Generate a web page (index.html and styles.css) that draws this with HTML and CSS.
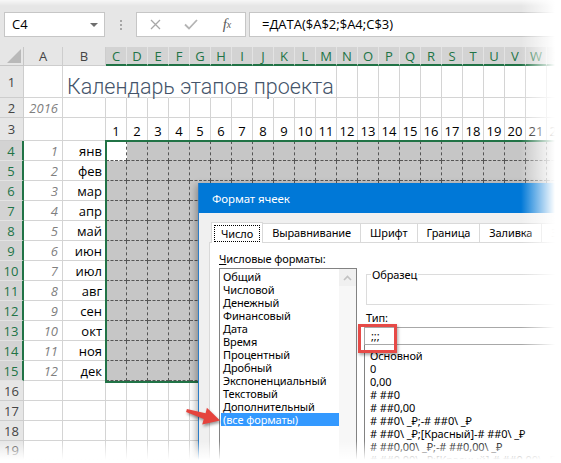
FILE: index.html
```html
<!DOCTYPE html>
<html lang="ru">
<head>
    <meta charset="UTF-8">
    <meta name="viewport" content="width=device-width, initial-scale=1.0">
    <title>Календарь этапов проекта</title>
    <link rel="stylesheet" href="styles.css">
</head>
<body>
    <div class="app">
        <div class="formula-bar">
            <div class="name-box">C4<span class="dropdown"></span></div>
            <div class="grip"><i></i><i></i><i></i></div>
            <div class="fx-buttons">
                <span class="fx-slot">
                    <svg width="11" height="11" viewBox="0 0 11 11"><path d="M1 1 L10 10 M10 1 L1 10" stroke="#a8a8a8" stroke-width="1.3" fill="none"/></svg>
                </span>
                <span class="fx-slot">
                    <svg width="14" height="11" viewBox="0 0 14 11"><path d="M1 5.5 L5 9.5 L13 1" stroke="#b4b4b4" stroke-width="1.8" fill="none"/></svg>
                </span>
                <span class="fx-slot fx">f<sub>x</sub></span>
            </div>
            <div class="formula-input">=ДАТА($A$2;$A4;C$3)</div>
        </div>

        <div class="sheet" id="sheet"></div>

        <!-- рамка выделенного диапазона -->
        <div class="selection"></div>

        <div class="dialog">
            <div class="dialog-title">Формат ячеек</div>
            <div class="dialog-body">
                <div class="tabs">
                    <div class="tab active"><span>Число</span></div>
                    <div class="tab">Выравнивание</div>
                    <div class="tab">Шрифт</div>
                    <div class="tab">Граница</div>
                    <div class="tab">Заливка</div>
                    <div class="tab disabled">Защита</div>
                </div>
                <div class="tab-page">
                    <div class="left-col">
                        <div class="label"><u>Ч</u>исловые форматы:</div>
                        <div class="category-list">
                            <ul>
                                <li>Общий</li>
                                <li>Числовой</li>
                                <li>Денежный</li>
                                <li>Финансовый</li>
                                <li>Дата</li>
                                <li>Время</li>
                                <li>Процентный</li>
                                <li>Дробный</li>
                                <li>Экспоненциальный</li>
                                <li>Текстовый</li>
                                <li>Дополнительный</li>
                                <li class="selected">(все форматы)</li>
                            </ul>
                            <div class="scrollbar">
                                <div class="scroll-up">
                                    <svg width="9" height="6" viewBox="0 0 9 6"><path d="M1 5 L4.5 1.5 L8 5" stroke="#c2c2c2" stroke-width="1.6" fill="none"/></svg>
                                </div>
                            </div>
                        </div>
                    </div>
                    <div class="right-col">
                        <fieldset class="sample"><legend>Образец</legend></fieldset>
                        <div class="label type-label">Тип:</div>
                        <div class="type-input">;;;</div>
                        <ul class="type-list">
                            <li>Основной</li>
                            <li>0</li>
                            <li>0,00</li>
                            <li># ##0</li>
                            <li># ##0,00</li>
                            <li># ##0\ _₽;-# ##0\ _₽</li>
                            <li># ##0\ _₽;[Красный]-# ##0\ _₽</li>
                            <li># ##0,00\ _₽;-# ##0,00\ _₽</li>
                            <li># ##0,00\ _₽;[Красный]-# ##0,00\ _₽</li>
                        </ul>
                    </div>
                </div>
            </div>
        </div>

        <!-- пометки поверх скриншота -->
        <div class="callout"></div>
        <svg class="red-arrow" width="45" height="30" viewBox="0 0 45 30">
            <polygon points="6.9,9.1 25.6,13.2 26.9,7.8 40,20.6 22.2,24.4 23.8,19 6.1,11.9" fill="#e5433d"/>
        </svg>

        <div class="fade fade-top"></div>
        <div class="fade fade-right"></div>
        <div class="fade fade-bottom"></div>
    </div>

    <script src="script.js"></script>
</body>
</html>
```

FILE: styles.css
```css
* {
    box-sizing: border-box;
}

body {
    margin: 0;
    background-color: #fff;
    font-family: 'Open Sans', sans-serif;
    color: #000;
}

.app {
    position: relative;
    width: 561px;
    height: 463px;
    overflow: hidden;
    background-color: #fff;
}

/* Строка формул */
.formula-bar {
    display: flex;
    align-items: flex-start;
    height: 47px;
    padding: 12px 0 0 4px;
    background-color: #e6e6e6;
    font-size: 13px;
}

.name-box {
    position: relative;
    width: 101px;
    height: 25px;
    padding-left: 7px;
    line-height: 23px;
    background-color: #fff;
    border: 1px solid #c6c6c6;
}

.dropdown {
    position: absolute;
    right: 6px;
    top: 10px;
    border-left: 4px solid transparent;
    border-right: 4px solid transparent;
    border-top: 4px solid #6e6e6e;
}

.grip {
    display: flex;
    flex-direction: column;
    gap: 2px;
    margin: 8px 0 0 15px;
}

.grip i {
    display: block;
    width: 2px;
    height: 2px;
    background-color: #a6a6a6;
}

.fx-buttons {
    display: flex;
    width: 110px;
    height: 25px;
    margin-left: 14px;
    background-color: #fff;
    border: 1px solid #c6c6c6;
}

.fx-slot {
    display: flex;
    align-items: center;
    justify-content: center;
    width: 36px;
}

.fx {
    font-family: 'Liberation Serif', serif;
    font-style: italic;
    font-size: 15px;
    color: #5a5a5a;
}

.fx sub {
    font-size: 10px;
    vertical-align: -1px;
}

.formula-input {
    flex: 1;
    height: 25px;
    margin-left: 3px;
    padding-left: 12px;
    line-height: 23px;
    background-color: #fff;
    border: 1px solid #c6c6c6;
    white-space: nowrap;
}

/* Лист */
.sheet {
    display: grid;
    grid-template-columns: 24px 39px 43px repeat(22, 21px);
    grid-template-rows: 19px 32px 20px 23px repeat(15, 20px);
    font-size: 13px;
    background-color: #fff;
}

.sheet > div {
    display: flex;
    align-items: flex-end;
    white-space: nowrap;
    line-height: 18px;
}

.corner {
    position: relative;
    background-color: #e6e6e6;
    border-right: 1px solid #c6c6c6;
    border-bottom: 1px solid #c6c6c6;
}

.corner::after {
    content: '';
    position: absolute;
    right: 2px;
    bottom: 2px;
    border-left: 14px solid transparent;
    border-bottom: 14px solid #b9b9b9;
}

.sheet > .col-head,
.sheet > .row-head {
    align-items: center;
    justify-content: center;
    background-color: #e6e6e6;
    color: #444;
    border-right: 1px solid #cdcdcd;
    border-bottom: 1px solid #cdcdcd;
}

.sheet > .col-head.selected {
    background-color: #d3d3d3;
    color: #217346;
    border-right-color: #e3e3e3;
    border-bottom: 2px solid #217346;
}

.sheet > .row-head.selected {
    background-color: #d3d3d3;
    color: #217346;
    border-bottom-color: #e3e3e3;
    border-right: 2px solid #217346;
}

.cell {
    border-right: 1px solid #d4d4d4;
    border-bottom: 1px solid #d4d4d4;
}

.cell.open {
    border-right-color: transparent;
}

.title {
    position: relative;
    z-index: 1;
    padding-left: 4px;
    padding-bottom: 1px;
    font-family: 'Roboto', sans-serif;
    font-weight: 300;
    font-size: 21.5px;
    line-height: 28px;
    color: #44546a;
    overflow: visible;
}

.sheet > .num {
    justify-content: flex-end;
    padding-right: 4px;
    font-style: italic;
    color: #7f7f7f;
}

.sheet > .month {
    justify-content: flex-end;
    padding-right: 3px;
}

.sheet > .day {
    justify-content: center;
}

.range {
    background-color: #c6c6c6;
    border-right: 1px dashed #555;
    border-bottom: 1px dashed #555;
}

.range.active {
    background-color: #fff;
}

.selection {
    position: absolute;
    left: 105px;
    top: 140px;
    width: 480px;
    height: 243px;
    border: 2px solid #217346;
    pointer-events: none;
}

/* Окно "Формат ячеек" */
.dialog {
    position: absolute;
    left: 198px;
    top: 183px;
    width: 400px;
    height: 300px;
    background-color: #f0f0f0;
    border-left: 1px solid #2a7cc7;
    box-shadow: -2px 2px 7px rgba(0, 0, 0, 0.3);
    font-family: 'Noto Sans', sans-serif;
    font-size: 11px;
    letter-spacing: -0.1px;
}

.dialog-title {
    height: 30px;
    padding-left: 13px;
    line-height: 31px;
    font-size: 11.5px;
    background-color: #0078d7;
    color: #fff;
}

.dialog-body {
    padding: 8px 0 0 10px;
}

.tabs {
    display: flex;
    align-items: flex-end;
    height: 21px;
    padding-left: 2px;
}

.tab {
    height: 19px;
    margin-left: -1px;
    padding: 0 9px;
    line-height: 18px;
    background-color: #fff;
    border: 1px solid #d9d9d9;
    border-bottom: none;
}

.tab.active {
    position: relative;
    z-index: 1;
    height: 21px;
    margin-left: 0;
    margin-bottom: -1px;
    padding: 2px 2px 0;
}

.tab.active span {
    display: block;
    padding: 0 6px;
    line-height: 15px;
    border: 1px dotted #000;
}

.tab.disabled {
    color: #b5b5b5;
}

.tab-page {
    display: flex;
    gap: 7px;
    height: 300px;
    padding: 8px 0 0 9px;
    background-color: #fff;
    border: 1px solid #d9d9d9;
}

.label {
    line-height: 15px;
}

.left-col {
    width: 138px;
}

.left-col .label {
    margin-bottom: 2px;
}

.category-list {
    display: flex;
    height: 200px;
    border: 1px solid #828282;
}

.category-list ul {
    flex: 1;
    margin: 0;
    padding: 1px 0 0 1px;
    list-style: none;
}

.category-list li {
    height: 13px;
    padding-left: 2px;
    line-height: 13px;
}

.category-list li.selected {
    background-color: #3399ff;
    color: #fff;
}

.scrollbar {
    width: 17px;
    background-color: #f7f7f7;
}

.scroll-up {
    display: flex;
    align-items: center;
    justify-content: center;
    height: 17px;
    background-color: #f0f0f0;
}

.right-col {
    flex: 1;
}

.sample {
    height: 38px;
    margin: 16px 0 0 2px;
    padding: 0;
    border: 1px solid #dcdcdc;
}

.sample legend {
    margin-left: 4px;
    padding: 0 1px;
    line-height: 15px;
}

.type-label {
    margin: 5px 0 0 2px;
}

.type-input {
    height: 18px;
    margin-top: 2px;
    padding-left: 6px;
    line-height: 16px;
    border: 1px solid #a8a8a8;
}

.type-list {
    margin: 0;
    padding: 4px 0 0 5px;
    list-style: none;
    border-left: 1px solid #828282;
}

.type-list li {
    height: 13px;
    line-height: 13px;
    white-space: nowrap;
}

.callout {
    position: absolute;
    left: 358px;
    top: 324px;
    width: 39px;
    height: 29px;
    border: 3px solid #e64a47;
    box-shadow: 1px 2px 3px rgba(0, 0, 0, 0.35);
}

.red-arrow {
    position: absolute;
    left: 180px;
    top: 400px;
    filter: drop-shadow(1px 2px 1.5px rgba(0, 0, 0, 0.4));
}

/* Размытые края картинки */
.fade {
    position: absolute;
    pointer-events: none;
}

.fade-top {
    top: 0;
    left: 0;
    width: 100%;
    height: 6px;
    background: linear-gradient(to bottom, rgba(255, 255, 255, 0.7), rgba(255, 255, 255, 0));
}

.fade-right {
    top: 0;
    right: 0;
    width: 40px;
    height: 100%;
    background: linear-gradient(to right, rgba(255, 255, 255, 0), #fff 85%);
}

.fade-bottom {
    left: 0;
    bottom: 0;
    width: 100%;
    height: 22px;
    background: linear-gradient(to bottom, rgba(255, 255, 255, 0), #fff 85%);
}
```

FILE: script.js
```js
// Строит сетку листа: заголовки, подписи месяцев и выделенный диапазон
const sheet = document.getElementById('sheet');
const letters = 'ABCDEFGHIJKLMNOPQRSTUVWX'.split('');
const months = ['янв', 'фев', 'мар', 'апр', 'май', 'июн', 'июл', 'авг', 'сен', 'окт', 'ноя', 'дек'];
const dayCols = 22; // столбцы C..X
const lastRow = 19;

function addCell(className, text) {
    const div = document.createElement('div');
    div.className = className;
    if (text !== undefined) div.textContent = text;
    sheet.appendChild(div);
}

// строка заголовков столбцов
addCell('corner');
letters.forEach((letter, i) => {
    addCell(i >= 2 ? 'col-head selected' : 'col-head', letter);
});

for (let r = 1; r <= lastRow; r++) {
    const inRange = r >= 4 && r <= 15;
    addCell(inRange ? 'row-head selected' : 'row-head', r);

    // столбец A
    if (r === 2) addCell('cell num', '2016');
    else if (inRange) addCell('cell num', r - 3);
    else addCell('cell');

    // столбец B
    if (r === 1) addCell('cell open title', 'Календарь этапов проекта');
    else if (inRange) addCell('cell month', months[r - 4]);
    else addCell('cell');

    // дни C..X
    for (let d = 1; d <= dayCols; d++) {
        if (r === 1) addCell(d <= 10 ? 'cell open' : 'cell');
        else if (r === 3) addCell('cell day', d);
        else if (inRange) addCell(r === 4 && d === 1 ? 'range active' : 'range');
        else addCell('cell');
    }
}
```
